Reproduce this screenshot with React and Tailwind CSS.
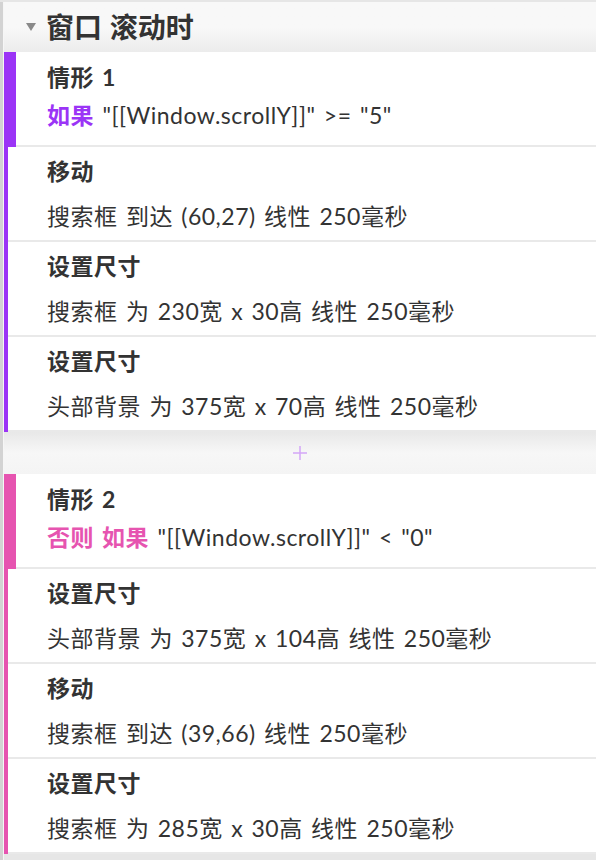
import React from "react";

const FONT = { fontFamily: '"Lato", "Noto Sans CJK SC", sans-serif' };

function CaseBlock({ title, cond, color, barClass, condClass }) {
  return (
    <div className="flex h-[95px]">
      <div className={`w-[12px] shrink-0 ${barClass}`} />
      <div className="flex-1 bg-white border-b-2 border-[#e9e9e9] pl-[31px] pt-[11px] [word-spacing:2px] tracking-[0.5px]">
        <div className="text-[23px] leading-[28px] font-bold text-[#333]">{title}</div>
        <div className="mt-[10px] text-[23px] leading-[28px] text-[#333] whitespace-nowrap">
          <span className={`font-bold ${condClass}`}>{color}</span> {cond}
        </div>
      </div>
    </div>
  );
}

function ActionRow({ title, desc, barClass }) {
  return (
    <div className="flex h-[95px]">
      <div className={`w-[4px] shrink-0 ${barClass}`} />
      <div className="flex-1 bg-white border-b-2 border-[#e9e9e9] pl-[39px] pt-[10px] [word-spacing:2px] tracking-[0.5px]">
        <div className="text-[23px] leading-[28px] font-bold text-[#333]">{title}</div>
        <div className="mt-[17px] text-[23px] leading-[28px] text-[#333] whitespace-nowrap">{desc}</div>
      </div>
    </div>
  );
}

export default function App() {
  const purple = "bg-[#9b34f6]";
  const pink = "bg-[#e654b0]";
  return (
    <div className="w-[596px] h-[860px] overflow-hidden bg-[#e6e6e6] pt-[2px]" style={FONT}>
      <div className="h-[858px] border-l-[3px] border-[#d3d3d3] pl-px bg-[#f6f6f6] flex flex-col">
        <div className="h-[50px] shrink-0 flex items-center pl-[22px] bg-gradient-to-b from-[#f8f8f8] via-[#f8f8f8] to-[#ececec]">
          <svg width="10" height="8" viewBox="0 0 10 8" className="shrink-0">
            <path d="M0 0 L10 0 L5 8 Z" fill="#8a8a8a" />
          </svg>
          <span className="ml-[10px] text-[28px] leading-[32px] font-bold text-[#333] [word-spacing:1px]">窗口 滚动时</span>
        </div>

        <CaseBlock
          title="情形 1"
          color="如果"
          cond={'"[[Window.scrollY]]" >= "5"'}
          barClass={purple}
          condClass="text-[#9b34f6]"
        />
        <ActionRow title="移动" desc="搜索框 到达 (60,27) 线性 250毫秒" barClass={purple} />
        <ActionRow title="设置尺寸" desc="搜索框 为 230宽 x 30高 线性 250毫秒" barClass={purple} />
        <ActionRow title="设置尺寸" desc="头部背景 为 375宽 x 70高 线性 250毫秒" barClass={purple} />

        <div className="h-[42px] shrink-0 flex items-center justify-center bg-gradient-to-b from-[#e8e8e8] via-[#f7f7f7] to-[#f4f4f4]">
          <svg width="14" height="14" viewBox="0 0 14 14">
            <path d="M7 0 V14 M0 7 H14" stroke="#d4a6f7" strokeWidth="1.5" />
          </svg>
        </div>

        <CaseBlock
          title="情形 2"
          color="否则 如果"
          cond={'"[[Window.scrollY]]" < "0"'}
          barClass={pink}
          condClass="text-[#e654b0]"
        />
        <ActionRow title="设置尺寸" desc="头部背景 为 375宽 x 104高 线性 250毫秒" barClass={pink} />
        <ActionRow title="移动" desc="搜索框 到达 (39,66) 线性 250毫秒" barClass={pink} />
        <ActionRow title="设置尺寸" desc="搜索框 为 285宽 x 30高 线性 250毫秒" barClass={pink} />
        <div className="flex-1 bg-[#e6e6e6]" />
      </div>
    </div>
  );
}
